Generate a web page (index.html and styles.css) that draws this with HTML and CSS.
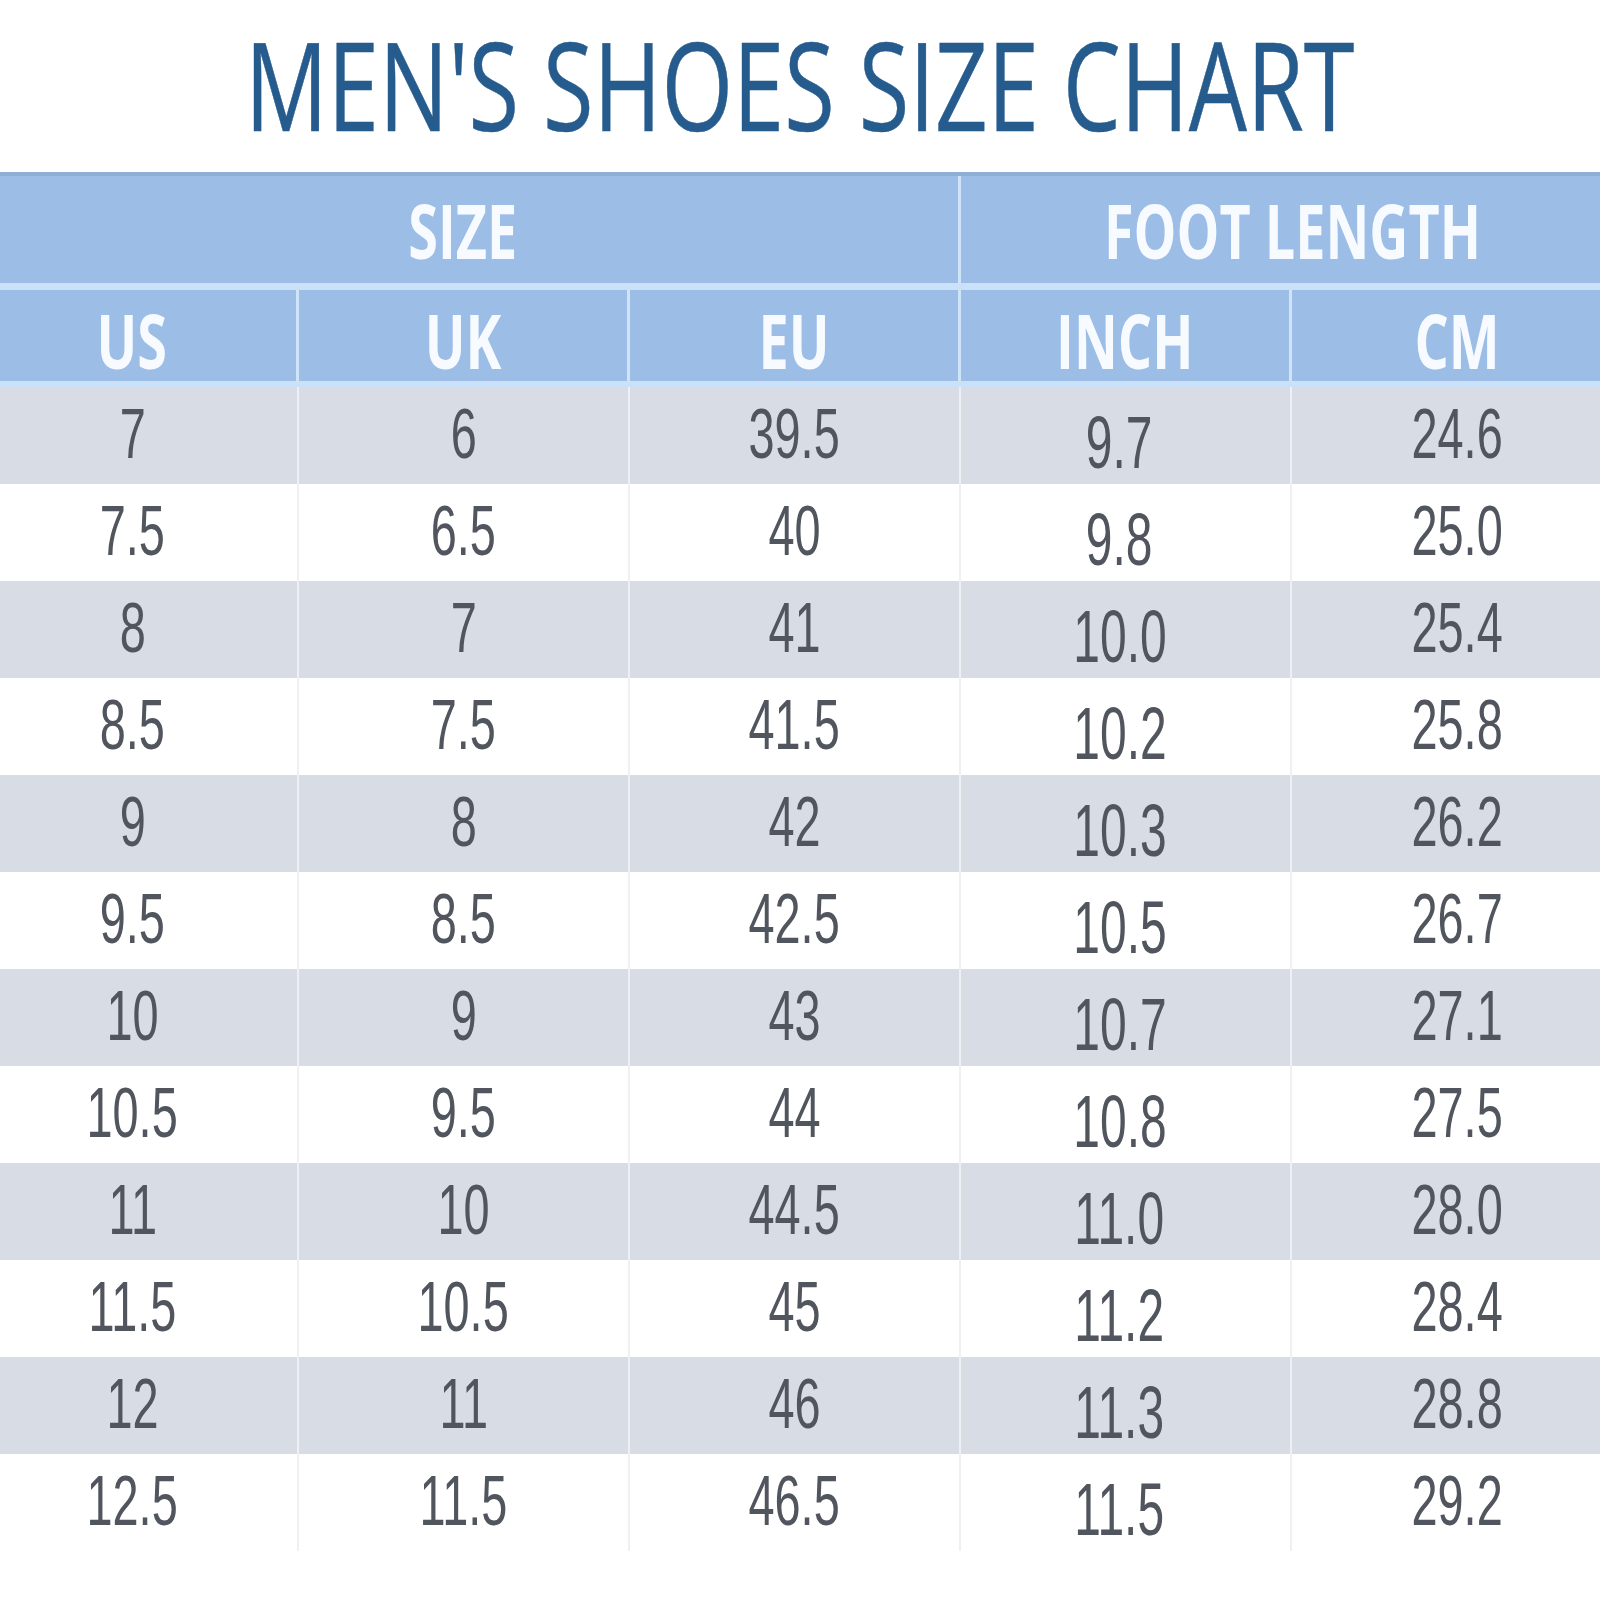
FILE: index.html
```html
<!DOCTYPE html>
<html>
<head>
<meta charset="utf-8">
<link rel="stylesheet" href="styles.css">
</head>
<body>
<div class="page">
  <h1 class="title"><span class="title-text">MEN'S SHOES SIZE CHART</span></h1>
  <div class="chart">
    <div class="head">
      <div class="group g-size"><span class="ht">SIZE</span></div>
      <div class="group g-foot"><span class="ht">FOOT LENGTH</span></div>
    </div>
    <div class="subhead">
      <div class="hc"><span class="ht">US</span></div>
      <div class="hc"><span class="ht">UK</span></div>
      <div class="hc"><span class="ht">EU</span></div>
      <div class="hc"><span class="ht">INCH</span></div>
      <div class="hc"><span class="ht">CM</span></div>
    </div>
    <div class="rows">
      <div class="row shade"><div class="c"><span>7</span></div><div class="c"><span>6</span></div><div class="c"><span>39.5</span></div><div class="c inch"><span>9.7</span></div><div class="c"><span>24.6</span></div></div>
      <div class="row"><div class="c"><span>7.5</span></div><div class="c"><span>6.5</span></div><div class="c"><span>40</span></div><div class="c inch"><span>9.8</span></div><div class="c"><span>25.0</span></div></div>
      <div class="row shade"><div class="c"><span>8</span></div><div class="c"><span>7</span></div><div class="c"><span>41</span></div><div class="c inch"><span>10.0</span></div><div class="c"><span>25.4</span></div></div>
      <div class="row"><div class="c"><span>8.5</span></div><div class="c"><span>7.5</span></div><div class="c"><span>41.5</span></div><div class="c inch"><span>10.2</span></div><div class="c"><span>25.8</span></div></div>
      <div class="row shade"><div class="c"><span>9</span></div><div class="c"><span>8</span></div><div class="c"><span>42</span></div><div class="c inch"><span>10.3</span></div><div class="c"><span>26.2</span></div></div>
      <div class="row"><div class="c"><span>9.5</span></div><div class="c"><span>8.5</span></div><div class="c"><span>42.5</span></div><div class="c inch"><span>10.5</span></div><div class="c"><span>26.7</span></div></div>
      <div class="row shade"><div class="c"><span>10</span></div><div class="c"><span>9</span></div><div class="c"><span>43</span></div><div class="c inch"><span>10.7</span></div><div class="c"><span>27.1</span></div></div>
      <div class="row"><div class="c"><span>10.5</span></div><div class="c"><span>9.5</span></div><div class="c"><span>44</span></div><div class="c inch"><span>10.8</span></div><div class="c"><span>27.5</span></div></div>
      <div class="row shade"><div class="c"><span>11</span></div><div class="c"><span>10</span></div><div class="c"><span>44.5</span></div><div class="c inch"><span>11.0</span></div><div class="c"><span>28.0</span></div></div>
      <div class="row"><div class="c"><span>11.5</span></div><div class="c"><span>10.5</span></div><div class="c"><span>45</span></div><div class="c inch"><span>11.2</span></div><div class="c"><span>28.4</span></div></div>
      <div class="row shade"><div class="c"><span>12</span></div><div class="c"><span>11</span></div><div class="c"><span>46</span></div><div class="c inch"><span>11.3</span></div><div class="c"><span>28.8</span></div></div>
      <div class="row"><div class="c"><span>12.5</span></div><div class="c"><span>11.5</span></div><div class="c"><span>46.5</span></div><div class="c inch"><span>11.5</span></div><div class="c"><span>29.2</span></div></div>
    </div>
  </div>
</div>
</body>
</html>
```

FILE: styles.css
```css
html, body {
  margin: 0;
  padding: 0;
  background: #ffffff;
}

.page {
  width: 1600px;
  height: 1600px;
  overflow: hidden;
  background: #ffffff;
}

.title {
  margin: 0;
  height: 172px;
  box-sizing: border-box;
  padding-top: 0;
  text-align: center;
  font-family: "Open Sans", "Liberation Sans", sans-serif;
  font-weight: 400;
  font-size: 122px;
  line-height: 168px;
  color: #255b8d;
  white-space: nowrap;
}

.title-text {
  display: inline-block;
  transform: scaleX(0.755);
  transform-origin: center;
  -webkit-text-stroke: 0.5px #255b8d;
}

.chart {
  margin-left: -32px;
  width: 1655px;
}

.head {
  display: grid;
  grid-template-columns: 993px 662px;
  height: 111px;
  box-sizing: border-box;
  border-top: 4px solid #8eaed6;
  background: #9bbde6;
}

.group {
  text-align: center;
  line-height: 107px;
  height: 107px;
}

.g-size {
  border-right: 3px solid #cfe4f8;
}

.ht {
  display: inline-block;
  font-family: "Open Sans", "Liberation Sans", sans-serif;
  font-weight: 700;
  font-size: 76px;
  color: #f7fbff;
  transform: scaleX(0.71);
  transform-origin: center;
  white-space: nowrap;
}

.subhead {
  display: grid;
  grid-template-columns: repeat(5, 331px);
  border-top: 7px solid #cbe1f7;
  border-bottom: 6px solid #cbe1f7;
  background: #9bbde6;
}

.hc {
  height: 91px;
  line-height: 100px;
  text-align: center;
  border-right: 3px solid #cfe4f8;
  overflow: visible;
}

.hc:last-child {
  border-right: none;
}

.row {
  display: grid;
  grid-template-columns: repeat(5, 331px);
  height: 97px;
  background: #ffffff;
}

.row.shade {
  background: #d8dce5;
}

.c {
  height: 97px;
  line-height: 94px;
  text-align: center;
  border-right: 2px solid #eef0f4;
  font-family: "Liberation Sans", Arial, sans-serif;
  font-size: 71px;
  color: #50555e;
}

.c:last-child {
  border-right: none;
}

.c span {
  display: inline-block;
  transform: scaleX(0.66);
  transform-origin: center;
}

.c.inch {
  padding-top: 8px;
  box-sizing: border-box;
  font-size: 75px;
}

.c.inch span {
  transform: translateX(-6px) scaleX(0.64);
}
```
